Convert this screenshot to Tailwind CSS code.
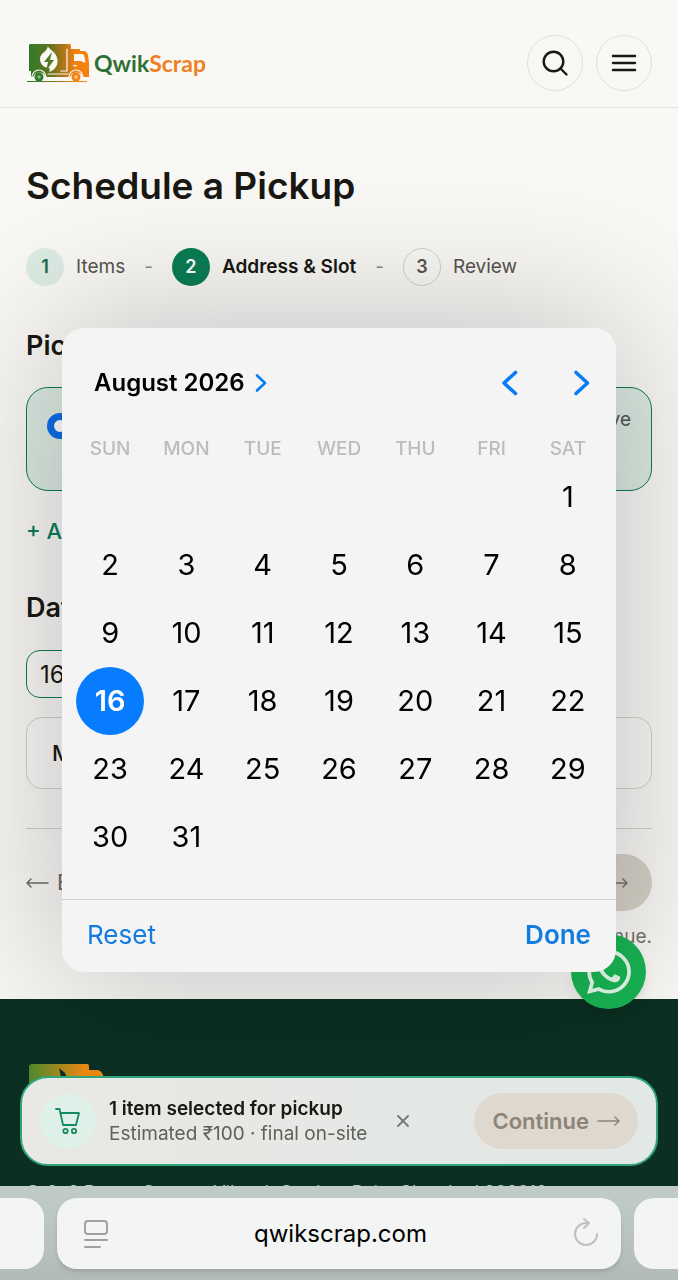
<!DOCTYPE html>
<html lang="en">
<head>
  <meta charset="UTF-8" />
  <meta name="viewport" content="width=device-width, initial-scale=1.0" />
  <title>Schedule a Pickup | QwikScrap</title>
  <script src="https://cdn.jsdelivr.net/npm/@tailwindcss/browser@4"></script>
</head>
<body class="relative flex min-h-screen flex-col overflow-x-hidden bg-[#f9f8f5] font-['Inter',sans-serif] text-[#1a1813]">

  <!-- Header -->
  <header class="flex items-center justify-between border-b border-[#e2e1dd] px-[26px] pt-[35px] pb-4">
    <a href="#" class="flex items-center gap-1" aria-label="QwikScrap home">
      <svg class="h-10 w-16" viewBox="0 0 64 40" fill="none">
        <defs>
          <linearGradient id="truck" x1="2" y1="0" x2="62" y2="0" gradientUnits="userSpaceOnUse">
            <stop stop-color="#2f7a2c" />
            <stop offset="0.35" stop-color="#5d7420" />
            <stop offset="0.6" stop-color="#b27618" />
            <stop offset="0.8" stop-color="#f5820f" />
          </linearGradient>
        </defs>
        <path fill="url(#truck)" d="M4 1h39a2 2 0 0 1 2 2v3h9v2h4c2 0 3 1 4 4l1 8v14h-6a7 7 0 0 0-13 0H20a7 7 0 0 0-13 0H5v-6H3V2z" />
        <path stroke="#f9f8f5" stroke-width="1.200" stroke-linecap="round" d="M41 6v22h-6M22 31h20" />
        <path stroke="#f9f8f5" stroke-width="1.200" d="M6 34a7 7 0 0 1 14 0M43 34a7 7 0 0 1 14 0" />
        <path fill="#f9f8f5" d="M48 11h8c1.500 0 2 1 2.500 3l1 6-5-2h-6.500zM47 22h4v1.300h-4z" />
        <path fill="#f9f8f5" d="M22 3c0 3 9 6 9.500 14 .5 6-3 10-8.500 12 1-2 1-3 0-4-5 0-9-4-9-9 0-6 7-7 8-13z" />
        <path fill="#4f7a22" d="m26 9-8 10h4l-2 9 8-11h-4z" />
        <circle cx="13" cy="34" r="4.500" fill="#2f7a2c" /><circle cx="13" cy="34" r="1.800" fill="#8eaf77" />
        <circle cx="50" cy="34" r="4.500" fill="#f5820f" /><circle cx="50" cy="34" r="1.800" fill="#f9c68d" />
        <path stroke="url(#truck)" stroke-width="1" d="M1 38.500l60 .1" />
      </svg>
      <span class="font-['Lato',sans-serif] text-[23px] font-bold text-[#2f7034]">Qwik<span class="text-[#ef8022]">Scrap</span></span>
    </a>
    <div class="flex gap-[13px]">
      <button aria-label="Search" class="flex size-14 items-center justify-center rounded-full border border-[#e0dfda]">
        <svg class="size-7" viewBox="0 0 28 28" fill="none" stroke="#1a1813" stroke-width="2.400" stroke-linecap="round"><circle cx="12.500" cy="12.500" r="9.800" /><path d="m19.500 19.500 6 6" /></svg>
      </button>
      <button aria-label="Menu" class="flex size-14 items-center justify-center rounded-full border border-[#e0dfda]">
        <svg class="size-7" viewBox="0 0 28 28" fill="none" stroke="#1a1813" stroke-width="2.400" stroke-linecap="round"><path d="M3 7h22M3 14h22M3 21h22" /></svg>
      </button>
    </div>
  </header>

  <!-- Pickup form -->
  <main class="px-[26px] pt-[54px] pb-12">
    <h1 class="text-[37px] leading-12 font-semibold">Schedule a Pickup</h1>

    <ol class="mt-[38px] flex items-center gap-3 text-[19px] text-[#57544e]">
      <li class="flex items-center gap-3"><span class="flex size-[38px] items-center justify-center rounded-full bg-[#dcebe3] text-lg font-semibold text-[#1b6b4b]">1</span>Items</li>
      <li class="px-[7px] text-[#8f8c86]" aria-hidden="true">-</li>
      <li class="flex items-center gap-3 font-semibold text-[#1a1813]"><span class="flex size-[38px] items-center justify-center rounded-full bg-[#0a7d55] text-lg text-white">2</span>Address &amp; Slot</li>
      <li class="px-[7px] text-[#8f8c86]" aria-hidden="true">-</li>
      <li class="flex items-center gap-3"><span class="flex size-[38px] items-center justify-center rounded-full border border-[#d2d0cb] text-lg font-semibold">3</span>Review</li>
    </ol>

    <h2 class="mt-10 text-[27px] leading-10 font-semibold">Pickup address</h2>
    <div class="mt-[21px] flex h-[104px] items-start justify-between rounded-[22px] border border-[#0a7d55] bg-[#dcebe3] px-5 pt-[18px]">
      <label class="flex items-center gap-3 pt-1.5 text-[22px] leading-7"><input type="radio" name="address" checked class="size-[26px] appearance-none rounded-full border-[7px] border-[#0a6fe8] bg-white" />Home</label>
      <button class="text-[19px] leading-7 text-[#57544e]">Remove</button>
    </div>
    <button class="mt-6 block text-[22px] leading-8 font-medium text-[#0a7d55]">+ Add new address</button>

    <h2 class="mt-[41px] text-[27px] leading-10 font-semibold">Date &amp; time</h2>
    <input type="text" value="16 Aug 2026" aria-label="Pickup date" class="mt-[22px] block h-12 w-1/2 rounded-[14px] border border-[#0a7d55] bg-[#faf9f7] px-[13px] text-2xl" />
    <button class="mt-[19px] block h-[72px] w-full rounded-[16px] border border-[#d2d0cb] bg-[#faf9f7] px-[25px] text-left text-[22px] font-medium">Morning</button>

    <div class="mt-[39px] flex items-center justify-between border-t border-[#d2d0cb] pt-[25px]">
      <a href="#" class="flex items-center gap-2 text-[22px] text-[#6e6b65]">
        <svg class="h-3 w-[23px]" viewBox="0 0 23 12" fill="none" stroke="currentColor" stroke-width="1.500" stroke-linecap="round" stroke-linejoin="round"><path d="M22 6H1M5 2 1 6l4 4" /></svg>
        Back
      </a>
      <button disabled class="flex h-[57px] items-center gap-2 rounded-full bg-[#d6d1c7] px-6 text-[22px] font-semibold text-[#77736b]">
        Continue
        <svg class="h-3 w-[23px]" viewBox="0 0 23 12" fill="none" stroke="currentColor" stroke-width="1.500" stroke-linecap="round" stroke-linejoin="round"><path d="M1 6h21M18 2l4 4-4 4" /></svg>
      </button>
    </div>
    <p class="mt-3 text-right text-[19px] leading-7 text-[#77746e]">Pick a date and slot to continue.</p>
  </main>

  <!-- Footer -->
  <footer class="grow bg-[#0b3023] px-[26px] pt-16 text-lg text-[#b5c4bc]">
    <svg class="h-12 w-20" viewBox="0 0 80 48" fill="url(#footerTruck)">
      <defs><linearGradient id="footerTruck"><stop stop-color="#4d8a2d" /><stop offset="0.75" stop-color="#ee8a12" /></linearGradient></defs>
      <path d="M5 1h56a2 2 0 0 1 2 2v4h8c4 0 6 4 7 8v25H3V3z" />
      <path fill="#0b3023" d="m33 5 6 5 4 10-8-6z" />
    </svg>
    <p class="mt-[68px] leading-7 whitespace-nowrap">C-2, 2 Power Source, Vikas k Garden, Rajat Chowk, d 202012</p>
  </footer>

  <!-- WhatsApp chat -->
  <a href="#" aria-label="Chat on WhatsApp" class="fixed right-8 bottom-[271px] flex size-[75px] items-center justify-center rounded-full bg-[#19b453] shadow-lg">
    <svg class="size-11" viewBox="0 0 24 24" fill="#e3f8e8"><path d="M17.472 14.382c-.297-.149-1.758-.867-2.030-.967-.273-.099-.471-.148-.67.150-.197.297-.767.966-.940 1.164-.173.199-.347.223-.644.075-.297-.150-1.255-.463-2.390-1.475-.883-.788-1.480-1.761-1.653-2.059-.173-.297-.018-.458.130-.606.134-.133.298-.347.446-.520.149-.174.198-.298.298-.497.099-.198.050-.371-.025-.520-.075-.149-.669-1.612-.916-2.207-.242-.579-.487-.500-.669-.510-.173-.008-.371-.010-.570-.010-.198 0-.520.074-.792.372-.272.297-1.040 1.016-1.040 2.479 0 1.462 1.065 2.875 1.213 3.074.149.198 2.096 3.200 5.077 4.487.709.306 1.262.489 1.694.625.712.227 1.360.195 1.871.118.571-.085 1.758-.719 2.006-1.413.248-.694.248-1.289.173-1.413-.074-.124-.272-.198-.570-.347m-5.421 7.403h-.004a9.870 9.870 0 0 1-5.031-1.378l-.361-.214-3.741.982.998-3.648-.235-.374a9.860 9.860 0 0 1-1.510-5.260c.001-5.450 4.436-9.884 9.888-9.884 2.640 0 5.122 1.030 6.988 2.898a9.825 9.825 0 0 1 2.893 6.994c-.003 5.450-4.437 9.884-9.885 9.884m8.413-18.297A11.815 11.815 0 0 0 12.050 0C5.495 0 .160 5.335.157 11.892c0 2.096.547 4.142 1.588 5.945L.057 24l6.305-1.654a11.882 11.882 0 0 0 5.683 1.448h.005c6.554 0 11.890-5.335 11.893-11.893a11.821 11.821 0 0 0-3.480-8.413z" /></svg>
  </a>

  <!-- Date picker -->
  <div role="dialog" aria-label="Choose date" class="absolute inset-x-[62px] top-[328px] overflow-hidden rounded-[22px] bg-[#f4f4f4] text-black shadow-[0_0_150px_10px_rgba(0,0,0,0.22)]">
    <div class="flex items-center justify-between pt-[35px] pr-[25px] pl-8">
      <button class="flex items-center gap-2 text-2xl leading-10 font-semibold">August 2026
        <svg class="h-5 w-4" viewBox="0 0 16 20" fill="none" stroke="#087cf8" stroke-width="2.600" stroke-linecap="round" stroke-linejoin="round"><path d="m4 2.500 8 7.500-8 7.500" /></svg>
      </button>
      <div class="flex gap-[54px]">
        <button aria-label="Previous month"><svg class="h-7 w-[18px]" viewBox="0 0 18 28" fill="none" stroke="#087cf8" stroke-width="3.600" stroke-linecap="round" stroke-linejoin="round"><path d="M14.500 3.500 3 14l11.500 10.500" /></svg></button>
        <button aria-label="Next month"><svg class="h-7 w-[18px]" viewBox="0 0 18 28" fill="none" stroke="#087cf8" stroke-width="3.600" stroke-linecap="round" stroke-linejoin="round"><path d="M3 3.500 14.500 14 3 24.500" /></svg></button>
      </div>
    </div>
    <div class="mt-8 grid grid-cols-7 px-[10px] text-center text-[19px] leading-7 font-medium text-[#bcbcbd]">
      <span>SUN</span><span>MON</span><span>TUE</span><span>WED</span><span>THU</span><span>FRI</span><span>SAT</span>
    </div>
    <div id="days" class="mb-7 grid grid-cols-7 justify-items-center px-[10px] text-[29px]"></div>
    <div class="flex h-[73px] items-center justify-between border-t border-[#cfcfcf] px-[25px] pb-1 text-[26px] text-[#147be0]">
      <button>Reset</button>
      <button class="font-semibold">Done</button>
    </div>
  </div>

  <!-- Selected items bar -->
  <aside class="fixed inset-x-5 bottom-[114px] flex h-[90px] items-center rounded-[28px] border-2 border-[#2fa57b] bg-linear-to-r from-[#e9e8e4] to-[#e1e8e6] px-[18px]">
    <span class="flex size-14 shrink-0 items-center justify-center rounded-full bg-[#def0e7]">
      <svg class="size-7" viewBox="0 0 28 28" fill="none" stroke="#168a60" stroke-width="1.800" stroke-linecap="round" stroke-linejoin="round"><path d="M2 2h3.500l3.500 16h13l3-12H6.500" /><circle cx="11.500" cy="24" r="2.200" /><circle cx="20" cy="24" r="2.200" /></svg>
    </span>
    <div class="ml-[13px] text-[19px] leading-[25px] whitespace-nowrap">
      <p class="font-semibold">1 item selected for pickup</p>
      <p class="text-[#5f615d]">Estimated ₹100 · final on-site</p>
    </div>
    <button aria-label="Dismiss" class="ml-4 flex size-10 items-center justify-center">
      <svg class="size-4" viewBox="0 0 16 16" stroke="#777975" stroke-width="1.800" stroke-linecap="round"><path d="m3 3 10 10M13 3 3 13" /></svg>
    </button>
    <button disabled class="ml-auto flex h-14 items-center gap-2 rounded-full bg-[#dfd8ce] px-[18px] text-[22px] font-semibold whitespace-nowrap text-[#8b8478]">
      Continue
      <svg class="h-3 w-[23px]" viewBox="0 0 23 12" fill="none" stroke="currentColor" stroke-width="1.500" stroke-linecap="round" stroke-linejoin="round"><path d="M1 6h21M18 2l4 4-4 4" /></svg>
    </button>
  </aside>

  <!-- Browser toolbar -->
  <nav class="fixed inset-x-0 bottom-0 flex h-[94px] gap-[13px] bg-linear-to-b from-[#c1ccc8] to-[#b3bbb8] pt-3 pb-[11px]">
    <div class="w-11 rounded-r-[20px] bg-[#f3f4f4]"></div>
    <div class="flex grow items-center justify-between rounded-[20px] bg-[#f3f4f4] pr-[19px] pl-[22px] shadow-md">
      <button aria-label="Page menu"><svg class="h-9 w-8" viewBox="0 0 32 36" fill="none" stroke="#a0a2a2" stroke-width="2" stroke-linecap="round"><rect x="6" y="5" width="22" height="13" rx="3" /><path d="M6 24h22M6 31h15" /></svg></button>
      <a href="#" class="text-2xl text-black">qwikscrap.com</a>
      <button aria-label="Reload"><svg class="size-8" viewBox="0 0 32 32" fill="none" stroke="#bfc1c1" stroke-width="2" stroke-linecap="round" stroke-linejoin="round"><path d="M27 16a11 11 0 1 1-11-11h3M14 1l5 4-5 5" /></svg></button>
    </div>
    <div class="w-11 rounded-l-[20px] bg-[#f3f4f4]"></div>
  </nav>

  <script>
    const days = document.getElementById("days");
    const firstWeekday = new Date(2026, 7, 1).getDay();

    for (let day = 1; day <= 31; day++) {
      const button = document.createElement("button");
      button.textContent = day;
      button.className = "size-[68px] rounded-full";
      if (day === 1) button.style.gridColumnStart = firstWeekday + 1;
      if (day === 16) button.className = "size-[68px] rounded-full bg-[#087cff] text-white font-semibold";
      days.appendChild(button);
    }
  </script>
</body>
</html>
